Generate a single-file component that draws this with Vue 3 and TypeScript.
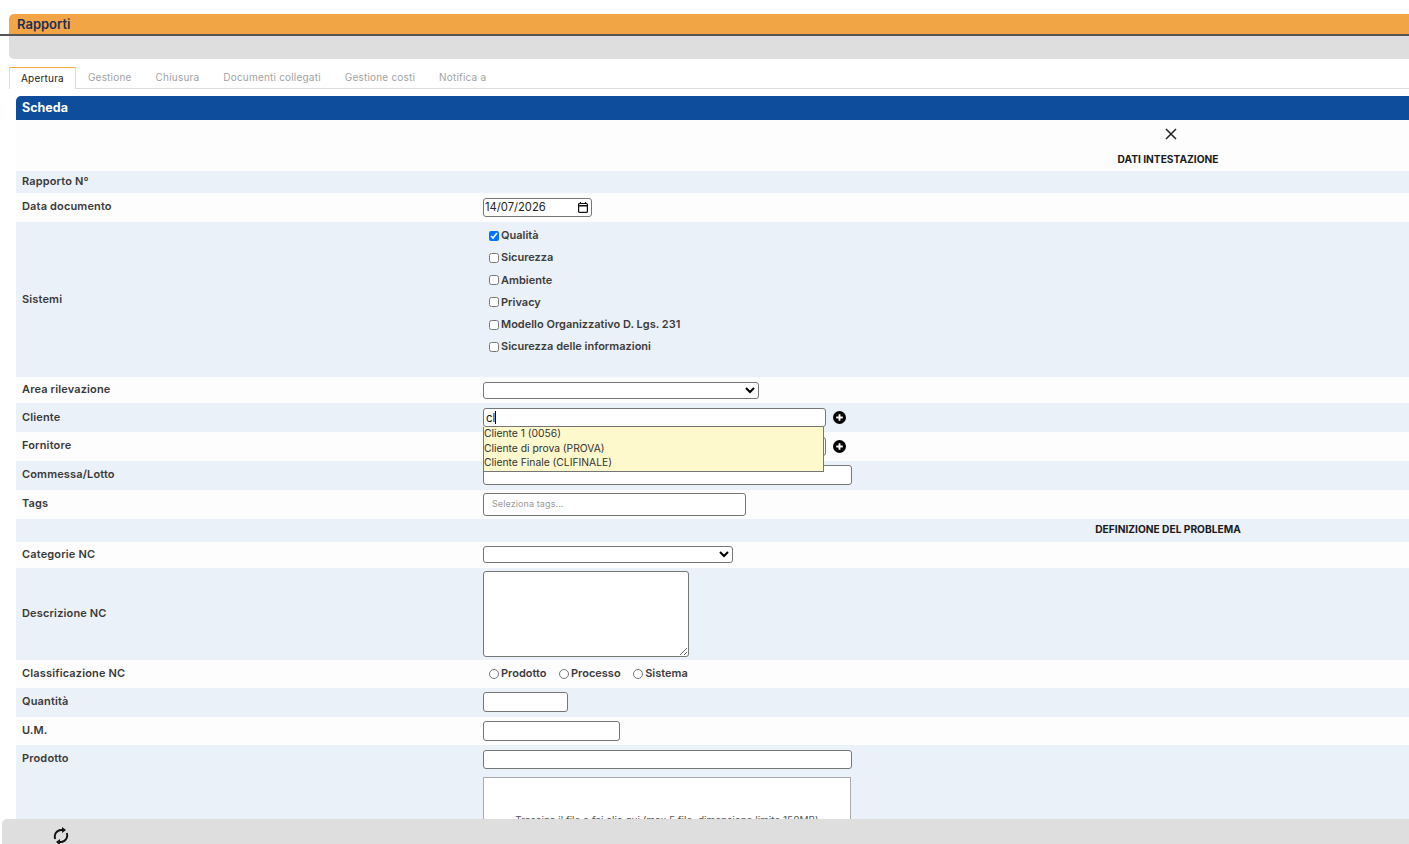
<template>
  <div class="page">
    <div class="title-bar">Rapporti</div>
    <div class="tool-bar"></div>

    <div class="tabs">
      <span v-for="(tab, i) in tabs" :key="tab" class="tab" :class="{ active: i === 0 }">{{ tab }}</span>
    </div>

    <section class="panel">
      <div class="panel-head">Scheda</div>

      <div class="row intro">
        <svg class="close" viewBox="0 0 12 12" width="12" height="12">
          <path d="M1 1l10 10M11 1L1 11" stroke="#222" stroke-width="1.5" fill="none" />
        </svg>
        <b class="section-title">DATI INTESTAZIONE</b>
      </div>

      <div class="row blue r22"><label>Rapporto N°</label></div>

      <div class="row r29">
        <label>Data documento</label>
        <div class="value date-wrap">
          <input class="date" type="text" value="14/07/2026" />
          <svg class="cal" viewBox="0 0 10 11" width="10" height="11">
            <path d="M2.500 0v2M7.500 0v2" stroke="#111" stroke-width="1.200" />
            <rect x="0.600" y="1.500" width="8.800" height="8.900" rx="1" fill="none" stroke="#111" stroke-width="1.200" />
            <path d="M1 3h8v1.500H1z" fill="#111" />
          </svg>
        </div>
      </div>

      <div class="row blue sistemi">
        <label>Sistemi</label>
        <div class="value checks">
          <div v-for="(s, i) in sistemi" :key="s" class="check">
            <input type="checkbox" :checked="i === 0" />
            <span>{{ s }}</span>
          </div>
        </div>
      </div>

      <div class="row r26">
        <label>Area rilevazione</label>
        <div class="value"><select class="sel-area"><option></option></select></div>
      </div>

      <div class="row blue r29 cliente">
        <label>Cliente</label>
        <div class="value with-add">
          <input class="txt w-cliente" type="text" value="cl" />
          <span class="caret"></span>
          <svg class="add" viewBox="0 0 14 14" width="13" height="13">
            <circle cx="7" cy="7" r="7" fill="#000" />
            <path d="M7 3.500v7M3.500 7h7" stroke="#fff" stroke-width="2" />
          </svg>
          <div class="suggest">
            <div v-for="c in clienti" :key="c">{{ c }}</div>
          </div>
        </div>
      </div>

      <div class="row r29">
        <label>Fornitore</label>
        <div class="value with-add">
          <input class="txt w-cliente" type="text" />
          <svg class="add" viewBox="0 0 14 14" width="13" height="13">
            <circle cx="7" cy="7" r="7" fill="#000" />
            <path d="M7 3.500v7M3.500 7h7" stroke="#fff" stroke-width="2" />
          </svg>
        </div>
      </div>

      <div class="row blue r29">
        <label>Commessa/Lotto</label>
        <div class="value"><input class="txt w-full nudge" type="text" /></div>
      </div>

      <div class="row r29">
        <label>Tags</label>
        <div class="value"><div class="tags">Seleziona tags...</div></div>
      </div>

      <div class="row blue r23 center-title"><b class="section-title">DEFINIZIONE DEL PROBLEMA</b></div>

      <div class="row r26">
        <label>Categorie NC</label>
        <div class="value"><select class="sel-cat nudge"><option></option></select></div>
      </div>

      <div class="row blue descr">
        <label>Descrizione NC</label>
        <div class="value"><textarea class="area"></textarea></div>
      </div>

      <div class="row r28">
        <label>Classificazione NC</label>
        <div class="value radios">
          <div v-for="c in classi" :key="c" class="check">
            <input type="radio" name="classe" />
            <span>{{ c }}</span>
          </div>
        </div>
      </div>

      <div class="row blue r29">
        <label>Quantità</label>
        <div class="value"><input class="txt w-qta nudge" type="text" /></div>
      </div>

      <div class="row r28">
        <label>U.M.</label>
        <div class="value"><input class="txt w-um" type="text" /></div>
      </div>

      <div class="row blue prodotto">
        <label>Prodotto</label>
        <div class="value">
          <input class="txt w-full h19" type="text" />
          <div class="drop">Trascina il file o fai clic qui (max 5 file, dimensione limite 150MB)</div>
        </div>
      </div>
    </section>

    <div class="bottom-bar">
      <svg class="refresh" viewBox="0 0 16 18" width="16" height="18">
        <path d="M2.300 12A6.500 6.500 0 0 1 8 3h1" fill="none" stroke="#111" stroke-width="1.900" />
        <path d="M9 0v6l4-3z" fill="#111" />
        <path d="M13.700 6A6.500 6.500 0 0 1 8 15H7" fill="none" stroke="#111" stroke-width="1.900" />
        <path d="M7 12v6l-4-3z" fill="#111" />
      </svg>
    </div>
  </div>
</template>

<script setup lang="ts">
const tabs = ['Apertura', 'Gestione', 'Chiusura', 'Documenti collegati', 'Gestione costi', 'Notifica a'];
const sistemi = ['Qualità', 'Sicurezza', 'Ambiente', 'Privacy', 'Modello Organizzativo D. Lgs. 231', 'Sicurezza delle informazioni'];
const clienti = ['Cliente 1 (0056)', 'Cliente di prova (PROVA)', 'Cliente Finale (CLIFINALE)'];
const classi = ['Prodotto', 'Processo', 'Sistema'];
</script>

<style>
html, body {
  margin: 0;
  height: 100%;
  overflow: hidden;
  background: #fff;
}
</style>

<style scoped>
.page {
  position: relative;
  height: 844px;
  overflow: hidden;
  padding-top: 14px;
  box-sizing: border-box;
  font-family: Inter, "Noto Sans", sans-serif;
  color: #333;
}

.title-bar {
  height: 20px;
  margin-left: 9px;
  padding-left: 8px;
  background: #f2a545;
  border-radius: 5px 0 0 0;
  font-size: 13px;
  font-weight: 600;
  line-height: 21px;
  color: #1b2f55;
}

.tool-bar {
  height: 25px;
  margin-left: 9px;
  background: #dedede;
  border-radius: 0 0 0 5px;
  position: relative;
}

.tool-bar::before {
  content: '';
  position: absolute;
  left: -9px;
  right: 0;
  top: 0;
  height: 2px;
  background: #555;
}

.tabs {
  display: flex;
  height: 22px;
  margin: 8px 0 7px 9px;
  border-bottom: 1px solid #ddd;
  box-sizing: border-box;
  font-size: 10px;
  letter-spacing: 0.2px;
  color: #a3a3a3;
}

.tab {
  padding: 0 12px;
  line-height: 21px;
}

.tab.active {
  height: 22px;
  box-sizing: border-box;
  padding: 0 11px;
  color: #222;
  background: #fff;
  border: 1px solid #ddd;
  border-top-color: #f2a545;
  border-bottom: 0;
}

.panel {
  margin-left: 16px;
}

.panel-head {
  height: 24px;
  padding-left: 6px;
  background: #0d4d9b;
  border-radius: 5px 0 0 0;
  color: #fff;
  font-size: 12.500px;
  font-weight: 700;
  line-height: 24px;
}

.row {
  display: flex;
  align-items: center;
  background: #fdfdfd;
  box-sizing: border-box;
  padding-left: 6px;
}

.row.blue {
  background: #eaf1f9;
}

.row label {
  width: 461px;
  flex: none;
  margin-top: -2px;
  font-size: 11px;
  font-weight: 600;
  letter-spacing: 0.15px;
  color: #3a3a3a;
}

.r22 { height: 22px; }
.r23 { height: 23px; }
.r26 { height: 26px; }
.r28 { height: 28px; }
.r29 { height: 29px; }

.r29 label {
  margin-top: -3px;
}

.row.cliente label {
  margin-top: -2px;
}

.intro {
  height: 51px;
  flex-direction: column;
  padding: 8px 0 0 911px;
}

.close {
  margin-left: 6px;
  flex: none;
}

.section-title {
  font-size: 10.200px;
  font-weight: 700;
  line-height: 13px;
  color: #1a1a1a;
  white-space: nowrap;
}

.intro .section-title {
  margin-top: 13px;
}

.center-title {
  justify-content: center;
  padding: 0 0 2px 911px;
}

.sistemi {
  height: 155px;
}

.checks {
  display: flex;
  flex-direction: column;
  gap: 7.300px;
  align-self: flex-start;
  padding: 5.500px 0 0 6px;
}

.check {
  display: flex;
  align-items: center;
  height: 15px;
  font-size: 11px;
  font-weight: 600;
  color: #3c3c3c;
}

.check input {
  width: 10px;
  height: 10px;
  margin: 1px 2px 0 0;
}

.radios {
  display: flex;
  gap: 12.500px;
  padding: 0 0 2px 6px;
}

.date,
.txt,
select,
.area,
.tags {
  box-sizing: border-box;
  border: 1px solid #767676;
  border-radius: 3px;
  background: #fff;
  font-family: Inter, "Noto Sans", sans-serif;
  outline: none;
  display: block;
  margin: 0;
}

.date-wrap {
  position: relative;
}

.date {
  width: 109px;
  height: 19px;
  padding: 0 1px 2px;
  font-size: 11.200px;
  color: #222;
}

.cal {
  position: absolute;
  left: 95px;
  top: 4px;
}

.txt {
  height: 20px;
  padding: 0 2px;
  font-size: 11.500px;
  color: #111;
}

.w-cliente { width: 343px; height: 19px; }
.w-full { width: 369px; }
.w-qta { width: 85px; }
.w-um { width: 137px; }
.txt.h19 { height: 19px; }
.txt.nudge,
select.nudge { margin-top: -1px; }

.sel-area { width: 276px; height: 17px; }
.sel-cat { width: 250px; height: 17px; }

.with-add {
  position: relative;
  display: flex;
  align-items: center;
}

.add {
  margin-left: 7px;
}

.caret {
  position: absolute;
  left: 12px;
  top: 3px;
  width: 1px;
  height: 13px;
  background: #000;
}

.suggest {
  position: absolute;
  left: 0;
  top: 19px;
  z-index: 5;
  width: 341px;
  height: 45px;
  box-sizing: border-box;
  background: #fef8cd;
  border: 1px solid #767676;
  border-top: 0;
  font-size: 10.300px;
  line-height: 14.500px;
  color: #333;
}

.suggest div:first-child {
  margin-top: -1px;
}

.tags {
  width: 263px;
  height: 23px;
  padding-left: 8px;
  font-size: 9px;
  letter-spacing: 0.1px;
  line-height: 19px;
  color: #999;
}

.descr {
  height: 92px;
}

.area {
  width: 206px;
  height: 86px;
}

.prodotto {
  height: 120px;
  align-items: flex-start;
  padding-top: 5px;
}

.row.prodotto label {
  margin-top: 1px;
}

.drop {
  width: 368px;
  height: 100px;
  margin-top: 8px;
  box-sizing: border-box;
  padding-top: 36px;
  background: #fff;
  border: 1px solid #aaa;
  text-align: center;
  font-size: 10px;
  white-space: nowrap;
  color: #555;
}

.bottom-bar {
  position: absolute;
  left: 2px;
  right: 0;
  bottom: 0;
  height: 25px;
  z-index: 10;
  background: #dedede;
  border-radius: 5px 0 0 0;
}

.refresh {
  position: absolute;
  left: 51px;
  top: 8px;
}
</style>
